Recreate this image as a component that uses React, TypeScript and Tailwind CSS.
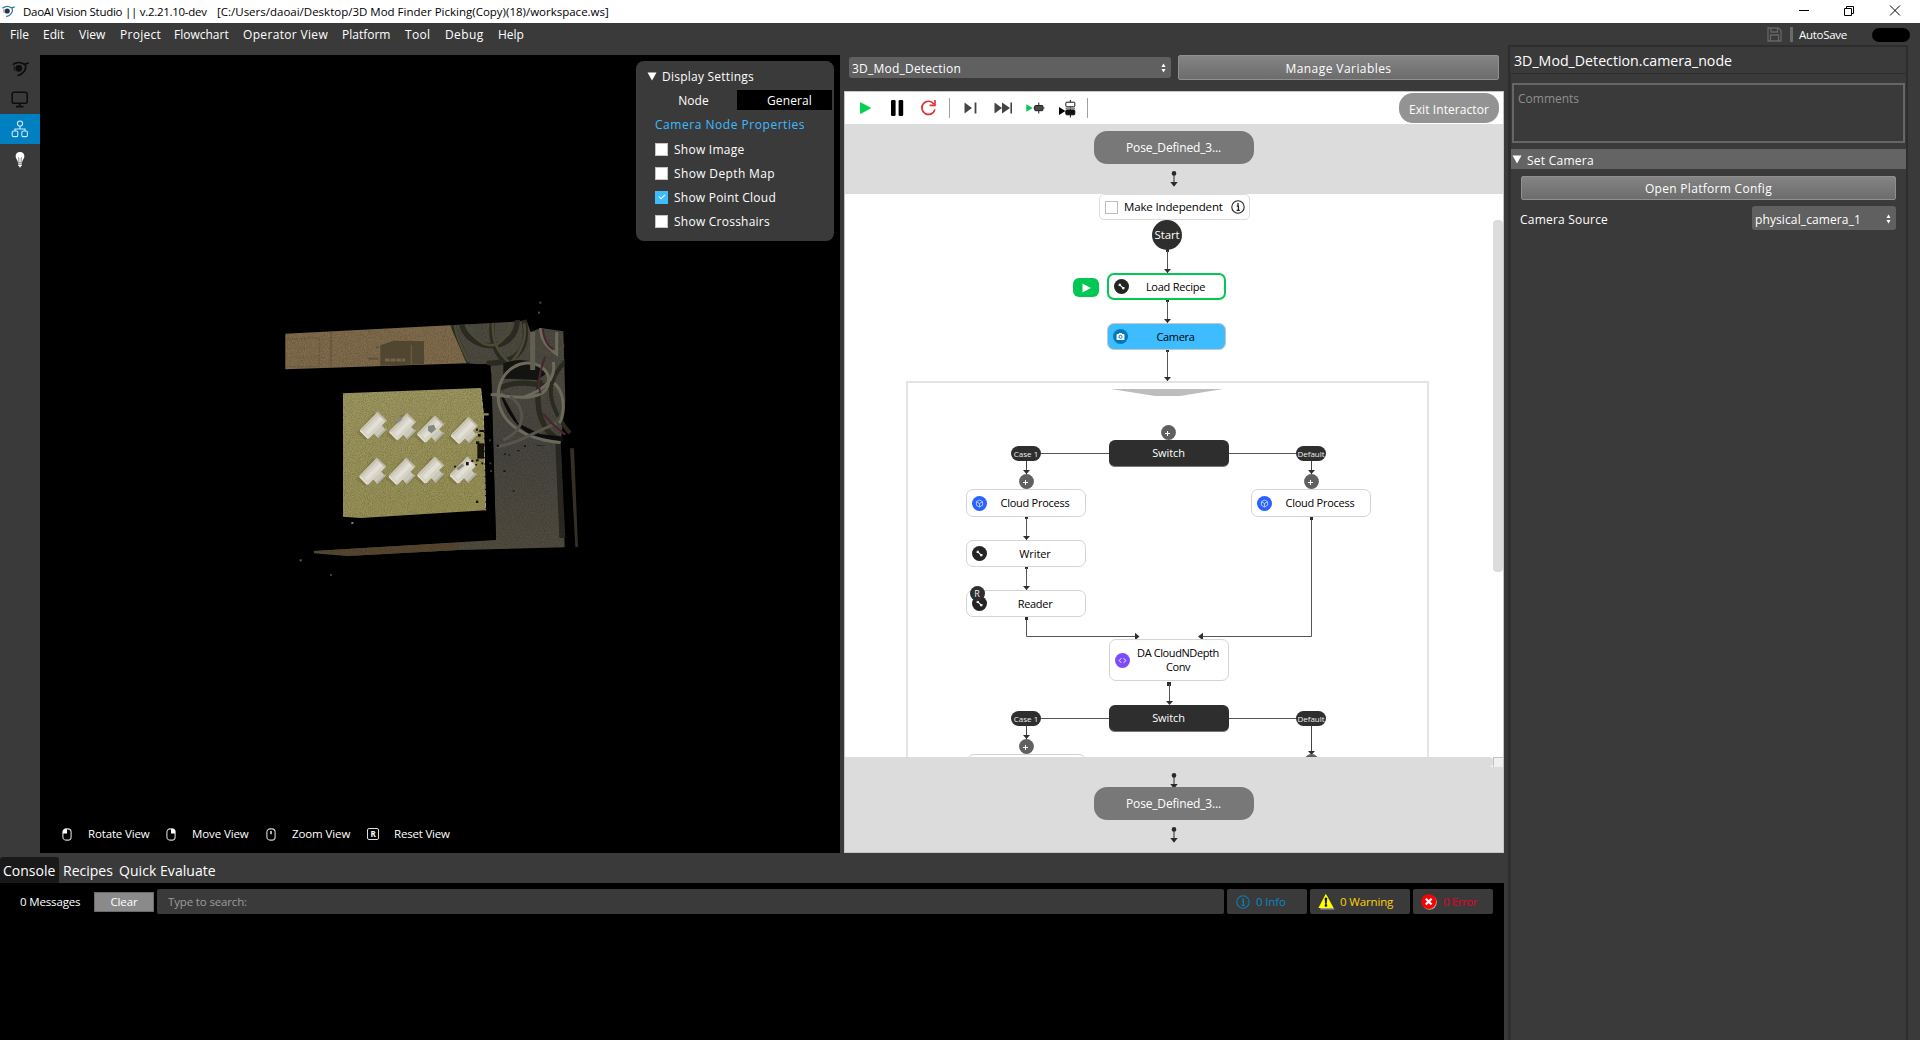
import React from 'react';
import type { ReactNode } from 'react';

/* ---------- icons ---------- */

function EyeLogo({ line, dot, className }: { line: string; dot: string; className: string }) {
  return (
    <svg viewBox="0 0 50 46" className={className} fill="none">
      <path d="M2 10 C12 3 26 2 36 9 L49 5" stroke={line} strokeWidth="5" />
      <path d="M39 10 C44 24 34 38 16 43" stroke={line} strokeWidth="5" />
      <path d="M8 14 C5 19 6 25 9 29" stroke={line} strokeWidth="2.5" />
      <circle cx="20" cy="21" r="10" fill={dot} />
    </svg>
  );
}

function Wrench() {
  return (
    <svg viewBox="0 0 15 15" className="size-[15px] shrink-0">
      <circle cx="7.5" cy="7.5" r="7.5" fill="#242424" />
      <path d="M5.8 5.8 L9.2 9.2" stroke="#fff" strokeWidth="1.1" />
      <circle cx="5.6" cy="5.8" r="1.3" fill="#fff" />
      <circle cx="9.5" cy="9.2" r="1.3" fill="#fff" />
      <path d="M3.6 5.4 L5.3 5.6 L5.2 3.8 Z M11.6 9.6 L9.8 9.4 L9.9 11.2 Z" fill="#242424" />
    </svg>
  );
}

function Cube() {
  return (
    <svg viewBox="0 0 15 15" className="size-[15px] shrink-0" fill="none">
      <circle cx="7.5" cy="7.5" r="7.5" fill="#2962ff" />
      <path
        d="M7.5 4 L10.6 5.7 V9.3 L7.5 11 L4.4 9.3 V5.7 Z M4.4 5.7 L7.5 7.5 L10.6 5.7 M7.5 7.5 V11"
        stroke="#c3d1ff"
        strokeWidth="0.9"
      />
    </svg>
  );
}

function CameraIcon() {
  return (
    <svg viewBox="0 0 15 15" className="size-[15px] shrink-0">
      <circle cx="7.5" cy="7.5" r="7.5" fill="#0277bd" />
      <path d="M4 5 H5.6 L6.3 4 H8.7 L9.4 5 H11 Q11.4 5 11.4 5.4 V10.4 Q11.4 10.9 11 10.9 H4 Q3.6 10.9 3.6 10.4 V5.4 Q3.6 5 4 5 Z" fill="#fff" />
      <circle cx="7.5" cy="7.8" r="1.5" fill="none" stroke="#0277bd" strokeWidth="1" />
    </svg>
  );
}

function CodeIcon() {
  return (
    <svg viewBox="0 0 15 15" className="size-[15px] shrink-0" fill="none">
      <circle cx="7.5" cy="7.5" r="7.5" fill="#7c4dff" />
      <path d="M6.2 5.3 L4.2 7.5 L6.2 9.7 M8.8 5.3 L10.8 7.5 L8.8 9.7" stroke="#fff" strokeWidth="1" />
    </svg>
  );
}

function Spinner() {
  return (
    <svg viewBox="0 0 5 10" className="h-[10px] w-[5px] shrink-0" fill="#fff">
      <path d="M0.5 4 L2.5 0.5 L4.5 4 Z" />
      <path d="M0.5 6 L2.5 9.5 L4.5 6 Z" />
    </svg>
  );
}

function InfoIcon({ color, className }: { color: string; className: string }) {
  return (
    <svg viewBox="0 0 14 14" className={className} fill="none">
      <circle cx="7" cy="7" r="6.2" stroke={color} strokeWidth="1.1" />
      <path d="M5.8 6 H7.4 V10.4 M5.6 10.4 H8.8" stroke={color} strokeWidth="1.3" />
      <rect x="6.2" y="3.2" width="1.6" height="1.6" fill={color} />
    </svg>
  );
}

function Mouse({ kind }: { kind: 'left' | 'right' | 'wheel' }) {
  return (
    <svg viewBox="0 0 10 13" className="h-[13px] w-[10px] shrink-0" fill="none">
      <rect x="0.9" y="0.9" width="8.2" height="11.2" rx="3.2" stroke="#d8d8d8" strokeWidth="1.1" />
      {kind === 'left' && <path d="M5 1 V5.6 H0.9 V3.6 Q1.2 1 4 1 Z" fill="#fff" />}
      {kind === 'right' && <path d="M5 1 V5.6 H9.1 V3.6 Q8.8 1 6 1 Z" fill="#fff" />}
      {kind === 'wheel' && <rect x="4.2" y="3" width="1.6" height="3.2" fill="#ddd" />}
    </svg>
  );
}

function DownArrow({ className }: { className: string }) {
  return (
    <svg viewBox="0 0 8 16" className={className}>
      <circle cx="4" cy="2.4" r="2.3" fill="#2a2a2a" />
      <path d="M4 2 V12" stroke="#2a2a2a" strokeWidth="1" />
      <path d="M0.3 11 H7.7 L4 15.8 Z" fill="#2a2a2a" />
    </svg>
  );
}

/* ---------- point cloud ---------- */

const TEES: [number, number][] = [
  [310, 376], [398, 380], [482, 387], [583, 391],
  [308, 514], [396, 514], [482, 510], [580, 510],
];
const HOLES: [number, number, number, number][] = [
  [618, 386, 6, 6], [628, 390, 14, 6], [624, 402, 8, 8], [618, 424, 10, 8], [622, 430, 20, 46], [618, 478, 8, 6],
  [634, 487, 6, 6], [588, 486, 8, 10], [604, 480, 6, 6], [616, 492, 5, 5], [618, 602, 7, 7], [552, 497, 6, 5],
  [680, 434, 7, 7], [702, 460, 6, 4], [700, 511, 7, 5], [742, 450, 6, 4], [762, 436, 6, 5], [716, 463, 4, 4], [728, 571, 6, 4],
];
const SPECKS: [number, number, string][] = [
  [244, 666, '#8d8058'], [89, 778, '#6b603a'], [180, 822, '#4a3f20'], [808, 5, '#4c4a38'], [804, 35, '#4c4a38'],
  [657, 418, '#3d3a20'], [658, 487, '#3d3a20'], [660, 510, '#3d3a20'],
];

function PointCloud() {
  return (
    <svg viewBox="0 0 960 840" className="absolute left-[230px] top-[245px] h-[280px] w-[320px]" fill="none">
      <defs>
        <filter id="grain" x="0" y="0" width="100%" height="100%" colorInterpolationFilters="sRGB">
          <feTurbulence type="fractalNoise" baseFrequency="0.35" numOctaves="2" seed="4" result="n" />
          <feColorMatrix in="n" type="matrix" values="0 0 0 0 0  0 0 0 0 0  0 0 0 0 0  0.4 0 0 0 -0.14" result="m" />
          <feComposite in="m" in2="SourceGraphic" operator="in" result="g" />
          <feMerge>
            <feMergeNode in="SourceGraphic" />
            <feMergeNode in="g" />
          </feMerge>
        </filter>
        <linearGradient id="floor" x1="0" y1="0" x2="0" y2="1">
          <stop offset="0" stopColor="#4e4c40" />
          <stop offset="0.55" stopColor="#484640" />
          <stop offset="1" stopColor="#524d3f" />
        </linearGradient>
        <linearGradient id="board" x1="0" y1="0" x2="0.3" y2="1">
          <stop offset="0" stopColor="#9f9862" />
          <stop offset="1" stopColor="#989156" />
        </linearGradient>
        <clipPath id="cables">
          <path d="M540 76 L720 66 L770 50 L778 76 L812 84 L882 92 L886 296 L908 320 L908 412 L868 432 L780 440 L680 450 L662 196 L590 190 Z" />
        </clipPath>
      </defs>
      <g filter="url(#grain)">
        <path d="M46 101 L540 76 L580 120 L592 190 L46 208 Z" fill="#816c4c" />
        <path d="M540 76 L720 66 L770 62 L782 96 L812 84 L880 94 L886 300 L872 430 L884 742 L566 750 L232 768 L132 760 L132 753 L345 740 L678 720 L662 196 L590 190 Z" fill="url(#floor)" />
        <path d="M132 753 L345 740 L566 728 L566 750 L232 768 Z" fill="#57482f" />
        <path d="M856 430 L872 430 L886 714 L868 714 Z" fill="#2b2a25" />
        <path d="M900 445 L912 445 L924 740 L916 742 Z" fill="#37332a" />
      </g>
      <path d="M183 95 V204" stroke="#5f4f38" strokeWidth="3" />
      <path d="M52 117 L148 114 V200 H52" stroke="#6a573c" strokeWidth="4" strokeDasharray="9 3" />
      <path d="M60 145 H138 M60 172 H138" stroke="#745f42" strokeWidth="4" strokeDasharray="9 3" />
      <path d="M331 136 L372 122 L462 124 V193 L331 197 Z" fill="#51462f" />
      <path d="M345 180 H405" stroke="#75634a" strokeWidth="9" strokeDasharray="14 3" />
      <path d="M424 134 V194" stroke="#6b5a3f" strokeWidth="4" />
      <path d="M294 176 H326 M318 142 H326" stroke="#5f4f38" strokeWidth="5" />
      <g clipPath="url(#cables)">
        <g stroke="#2b2a20" strokeWidth="16">
          <path d="M552 72 C552 110 578 150 592 190" />
          <path d="M575 75 C600 160 740 160 742 60" />
          <path d="M668 60 C655 150 700 210 810 236" />
          <path d="M762 60 C780 150 740 190 650 190" />
          <path d="M810 240 C790 330 820 400 870 420" />
          <path d="M690 265 C730 240 800 250 840 262" />
          <path d="M890 180 C830 240 820 300 900 400" strokeWidth="12" />
        </g>
        <g stroke="#4a4a37" strokeWidth="8">
          <path d="M554 72 C560 120 580 150 596 186" />
          <path d="M590 72 C620 145 700 170 722 66" />
          <path d="M670 60 C660 140 700 200 800 222" />
          <path d="M762 70 C772 120 750 160 720 190" />
          <path d="M780 120 C800 170 850 170 890 130" />
          <path d="M850 260 C900 300 880 360 830 385" />
        </g>
        <path d="M700 190 Q780 160 832 220 L800 240 L700 236 Z" fill="#131310" />
        <path d="M690 280 Q720 380 800 414 L880 424 L880 410 L810 402 L745 370 L700 290 Z" fill="#0c0c0a" />
        <g stroke="#6c6a5b" strokeWidth="9">
          <path d="M664 282 C760 300 850 300 834 226 C810 172 730 180 700 232 C660 300 690 410 872 428" />
          <path d="M788 96 V210" strokeWidth="15" stroke="#615f52" />
          <path d="M812 84 C812 120 830 140 860 162 V96" />
          <path d="M850 186 C860 240 820 270 760 292" />
          <path d="M852 250 C880 270 890 330 868 370" />
          <path d="M674 442 C760 425 780 400 860 370" stroke="#57554a" />
          <path d="M720 290 C770 320 770 390 700 420" stroke="#55534a" />
        </g>
        <g stroke="#4a2430" strokeWidth="6">
          <path d="M818 84 C822 120 834 140 850 148" />
          <path d="M826 170 C810 210 800 250 812 280" />
          <path d="M820 340 C850 380 870 390 886 404" />
        </g>
        <path d="M800 436 H836 V460 H806 Z" fill="#1c1b16" />
      </g>
      <path d="M185 214 L650 192 L664 220 L678 718 L345 736 L140 744 Z" fill="#000" />
      <path d="M662 284 H700" stroke="#6c6a5b" strokeWidth="8" />
      <g filter="url(#grain)">
        <path d="M219 280 L632 264 L640 340 L646 631 L272 654 L219 650 Z" fill="url(#board)" />
      </g>
      <path d="M632 266 L640 340 L647 631" stroke="#aaa47e" strokeWidth="3" strokeDasharray="16 3" />
      <path d="M640 343 H656" stroke="#8f8562" strokeWidth="7" />
      {TEES.map(([x, y], i) => (
        <g key={i} transform={`translate(${x} ${y})`}>
          <path d="M-36 34 L14 -28 M0 0 L28 30" stroke="#766e36" strokeWidth="34" opacity="0.5" />
          <path d="M-2 -4 L24 24" stroke="#cbc7b9" strokeWidth="34" />
          <path d="M14 36 L37 12" stroke="#aeb0a4" strokeWidth="6" strokeLinecap="round" />
          <path d="M-27 27 L24 -25" stroke="#d6d2c5" strokeWidth="38" />
          <path d="M-36 14 L12 -34" stroke="#c8c3b0" strokeWidth="7" />
          <path d="M-20 24 L26 -22" stroke="#e2dfd5" strokeWidth="12" />
          <path d="M-38 17 L-17 38" stroke="#e9e6de" strokeWidth="4" strokeLinecap="round" />
          <path d="M13 -38 L38 -14" stroke="#bdb8a3" strokeWidth="5" strokeLinecap="round" />
        </g>
      ))}
      <path d="M474 378 L492 374 L498 388 L484 400 L474 392 Z" fill="#85887f" />
      <path d="M380 366 L394 354 M562 508 L580 494" stroke="#8a8a80" strokeWidth="9" />
      {HOLES.map(([x, y, w, h], i) => (
        <rect key={i} x={x} y={y} width={w} height={h} fill="#15140c" />
      ))}
      {SPECKS.map(([x, y, c], i) => (
        <rect key={i} x={x} y={y} width="6" height="6" fill={c} />
      ))}
    </svg>
  );
}

/* ---------- small UI pieces ---------- */

const MENU: [string, string][] = [
  ['File', 'w-[33px]'],
  ['Edit', 'w-[36px]'],
  ['View', 'w-[41px]'],
  ['Project', 'w-[54px] tracking-[0.27px]'],
  ['Flowchart', 'w-[69px]'],
  ['Operator View', 'w-[99px] tracking-[0.33px]'],
  ['Platform', 'w-[63px]'],
  ['Tool', 'w-[40px] tracking-[0.3px]'],
  ['Debug', 'w-[53px] tracking-[0.4px]'],
  ['Help', 'w-[30px]'],
];

function CheckRow({ label, checked, className }: { label: string; checked?: boolean; className: string }) {
  return (
    <div className="flex h-6 items-center gap-[6px]">
      {checked ? (
        <span className="flex size-[13px] items-center justify-center bg-[#3dbdff]">
          <svg viewBox="0 0 9 7" className="h-[6px] w-[8px]" fill="none">
            <path d="M1 3 L3.4 5.6 L8 1" stroke="#fff" strokeWidth="1.2" />
          </svg>
        </span>
      ) : (
        <span className="size-[13px] border border-[#c4c4c4] bg-white" />
      )}
      <span className={`pt-[2px] ${className}`}>{label}</span>
    </div>
  );
}

function FlowNode({ pos, icon, children, look }: { pos: string; icon: ReactNode; children: ReactNode; look?: string }) {
  return (
    <div className={`absolute flex items-center rounded-[7px] pl-[5px] pr-[2px] text-[11px] ${pos} ${look ?? 'border-[1.5px] border-[#d4d4d4] bg-white'}`}>
      {icon}
      <span className="flex-1 text-center leading-[14px]">{children}</span>
    </div>
  );
}

function SwitchNode({ pos }: { pos: string }) {
  return (
    <div className={`absolute flex h-[27px] w-[120px] items-center justify-center rounded-[6px] border-b border-[#777] bg-[#2e2e2e] pr-px text-[11px] tracking-[-0.1px] text-white ${pos}`}>
      Switch
    </div>
  );
}

function Pill({ pos, children }: { pos: string; children: string }) {
  return (
    <div className={`absolute flex h-[15px] w-[30px] items-center justify-center whitespace-nowrap rounded-full bg-[#2e2e2e] text-[8px] leading-none text-[#eee] ${pos}`}>
      {children}
    </div>
  );
}

function Plus({ pos }: { pos: string }) {
  return (
    <svg viewBox="0 0 15 15" className={`absolute size-[15px] ${pos}`}>
      <circle cx="7.5" cy="7.5" r="7.4" fill="#606060" />
      <path d="M6.5 6 V11 M4 8.5 H9" stroke="#fff" strokeWidth="1" />
    </svg>
  );
}

/* Vertical connectors of the flow: x, start, end */
const LINKS: [number, number, number][] = [
  [322, 57, 79],
  [322, 107, 129],
  [322, 157, 187],
  [181, 324, 346],
  [181, 374, 396],
];
const DROPS: [number, number, number][] = [
  [181, 266, 280],
  [466, 266, 280],
  [181, 531, 545],
  [466, 531, 561],
];

function Connectors() {
  return (
    <svg viewBox="0 0 648 563" className="absolute left-0 top-0 h-[563px] w-[648px]" fill="none">
      {LINKS.map(([x, a, b]) => (
        <g key={`${x}-${a}`}>
          <rect x={x - 1} y={a - 2} width="3" height="3" fill="#2e2e2e" />
          <path d={`M${x + 0.5} ${a} V${b}`} stroke="#555" />
          <path d={`M${x - 3} ${b - 4} H${x + 4} L${x + 0.5} ${b} Z`} fill="#2e2e2e" />
        </g>
      ))}
      {DROPS.map(([x, a, b]) => (
        <g key={`${x}-${a}`}>
          <path d={`M${x + 0.5} ${a} V${b}`} stroke="#444" />
          <path d={`M${x - 3} ${b - 4} H${x + 4} L${x + 0.5} ${b} Z`} fill="#2e2e2e" />
        </g>
      ))}
      <path d="M181.5 425 V442.5 H292" stroke="#555" />
      <path d="M466.5 325 V442.5 H356" stroke="#555" />
      <path d="M290 438.8 V446.2 L294.5 442.5 Z M358 438.8 V446.2 L353 442.5 Z" fill="#2e2e2e" />
      <path d="M180 423 h3 v3 h-3 Z M465 323 h3 v3 h-3 Z M322 488 h4 v4 h-4 Z" fill="#2e2e2e" />
      <path d="M324.5 490 V510" stroke="#555" />
      <path d="M321 507 H328 L324.5 511 Z" fill="#2e2e2e" />
      <path d="M196 259.5 H265 M383 259.5 H452 M196 524.5 H265 M383 524.5 H452" stroke="#555" />
      <path d="M266 195 H378 L335 202 H310 Z" fill="#bdbdbd" />
    </svg>
  );
}

/* ---------- sections ---------- */

function TitleBar() {
  return (
    <div className="flex h-[23px] shrink-0 items-center bg-white pl-[2px] text-black">
      <EyeLogo line="#2b7fa8" dot="#33303c" className="h-[13px] w-[13px]" />
      <span className="ml-[8px] w-[194px] whitespace-nowrap text-[11.5px] leading-none tracking-[-0.28px]">
        DaoAI Vision Studio || v.2.21.10-dev
      </span>
      <span className="whitespace-nowrap text-[11.5px] leading-none">
        [C:/Users/daoai/Desktop/3D Mod Finder Picking(Copy)(18)/workspace.ws]
      </span>
      <svg viewBox="0 0 104 12" className="ml-auto mr-[18px] h-[12px] w-[104px] -translate-y-px" fill="none" stroke="#000">
        <path d="M1 5.5 H11" />
        <path d="M46.5 3.5 H53.5 V10.5 H46.5 Z M48.5 3 V1.5 H55.5 V8.5 H54" />
        <path d="M92 0.5 L102 10.5 M102 0.5 L92 10.5" />
      </svg>
    </div>
  );
}

function MenuBar() {
  return (
    <div className="flex h-[22px] shrink-0 items-center pl-[10px] pt-px">
      {MENU.map(([label, cls]) => (
        <span key={label} className={`whitespace-nowrap pt-px ${cls}`}>
          {label}
        </span>
      ))}
      <svg viewBox="0 0 15 15" className="ml-auto size-[15px]" fill="none" stroke="#666" strokeWidth="1.3">
        <path d="M1 1 H11.5 L14 3.5 V14 H1 Z M4 1 V5 H10.5 V1 M3.5 14 V8 H11.5 V14" />
      </svg>
      <span className="ml-[8px] h-[15px] w-[3px] bg-[#6a6a6a]" />
      <span className="ml-[6px] w-[73px] pt-px text-[11.5px] font-medium tracking-[-0.3px]">AutoSave</span>
      <span className="mr-[10px] h-[14px] w-[38px] rounded-full bg-black" />
    </div>
  );
}

function Sidebar() {
  return (
    <div className="flex w-10 shrink-0 flex-col pt-[9px]">
      <div className="flex h-[30px] items-center justify-center">
        <EyeLogo line="#0d0d0d" dot="#0d0d0d" className="h-[16px] w-[17px]" />
      </div>
      <div className="flex h-[30px] items-center justify-center">
        <svg viewBox="0 0 18 17" className="h-[17px] w-[18px]" fill="none" stroke="#0d0d0d" strokeWidth="1.5">
          <rect x="1.2" y="1.2" width="15" height="11" rx="1.8" />
          <path d="M8.7 12.5 V15.5 M5 15.7 H12.5" strokeWidth="1.8" />
        </svg>
      </div>
      <div className="flex h-[30px] items-center justify-center bg-[#0080c0]">
        <svg viewBox="0 0 18 18" className="size-[18px]" fill="none" stroke="#cfeaff" strokeWidth="1.1">
          <circle cx="9" cy="3.6" r="2.6" />
          <path d="M9 6.2 V9 M4 11 V9 H14 V11" />
          <rect x="1.2" y="11" width="5.6" height="5.6" rx="1.4" />
          <rect x="10.8" y="11" width="5.6" height="5.6" rx="1.4" />
        </svg>
      </div>
      <div className="flex h-[30px] items-center justify-center">
        <svg viewBox="0 0 12 17" className="h-[17px] w-[12px]">
          <path d="M6 1 C9 1 10.4 3.2 10.4 5.2 C10.4 7.6 8.4 8.6 8 11.4 H4 C3.6 8.6 1.6 7.6 1.6 5.2 C1.6 3.2 3 1 6 1 Z" fill="#fff" />
          <path d="M4.8 11 V7 L4 6.4 M7.2 11 V7 L8 6.4" stroke="#3a3a3a" strokeWidth="0.6" fill="none" />
          <path d="M4.2 12.8 H7.8 M4.2 14.4 H7.8 M5 15.8 H7" stroke="#fff" strokeWidth="1.1" />
        </svg>
      </div>
    </div>
  );
}

function Viewport() {
  return (
    <div className="relative mt-[10px] flex h-[798px] w-[800px] flex-col justify-between bg-black">
      <PointCloud />
      <div className="relative ml-[596px] mt-[6px] h-[180px] w-[198px] rounded-[8px] bg-[#3a3a3a] pt-[4px]">
        <div className="flex h-[22px] items-center pl-[11px]">
          <svg viewBox="0 0 10 9" className="mr-[5px] h-[9px] w-[10px]">
            <path d="M0.5 0.5 H9.5 L5 8.5 Z" fill="#fff" />
          </svg>
          <span className="pt-px tracking-[0.24px]">Display Settings</span>
        </div>
        <div className="mt-[3px] flex h-5 pr-[2px]">
          <span className="flex w-[101px] items-center justify-center pl-[14px] pt-[2px]">Node</span>
          <span className="flex flex-1 items-center justify-center bg-black pl-[10px] pt-[2px] tracking-[0.12px]">General</span>
        </div>
        <div className="flex h-[27px] items-center pl-[19px] pt-[3px] tracking-[0.53px] text-[#3dbdff]">Camera Node Properties</div>
        <div className="pl-[19px]">
          <CheckRow label="Show Image" className="tracking-[0.25px]" />
          <CheckRow label="Show Depth Map" className="tracking-[0.36px]" />
          <CheckRow label="Show Point Cloud" checked className="tracking-[0.23px]" />
          <CheckRow label="Show Crosshairs" className="tracking-[0.24px]" />
        </div>
      </div>
      <div className="mb-[10px] flex h-[18px] items-center whitespace-nowrap pl-[22px] text-[11.5px] tracking-[-0.1px]">
        <Mouse kind="left" />
        <span className="ml-[16px] w-[78px] tracking-[-0.15px]">Rotate View</span>
        <Mouse kind="right" />
        <span className="ml-[16px] w-[74px]">Move View</span>
        <Mouse kind="wheel" />
        <span className="ml-[16px] w-[75px]">Zoom View</span>
        <span className="flex size-[12px] items-center justify-center rounded-[2px] border border-[#ddd] text-[8px] font-bold leading-none">R</span>
        <span className="ml-[15px] tracking-[-0.2px]">Reset View</span>
      </div>
    </div>
  );
}

function Toolbar() {
  return (
    <div className="flex h-8 shrink-0 items-center justify-between bg-white pl-[14px] pr-[4px]">
      <svg viewBox="0 0 232 22" className="h-[22px] w-[232px]" fill="none">
        <path d="M1 6 Q1 5 2 5.4 L11.5 10.4 Q12 11 11.5 11.6 L2 16.8 Q1 17 1 16 Z" fill="#05d253" />
        <rect x="32" y="3" width="4.6" height="16" rx="1.2" fill="#000" />
        <rect x="39.6" y="3" width="4.6" height="16" rx="1.2" fill="#000" />
        <path d="M75 7.2 A6.6 6.6 0 1 0 75.9 12.4" stroke="#dc2f2f" strokeWidth="1.7" />
        <path d="M76 3 V8.4 H70.6" stroke="#dc2f2f" strokeWidth="1.6" />
        <path d="M90.5 1 V21 M228.5 1 V21" stroke="#a0a0a0" />
        <path d="M105.5 5.5 L113 11 L105.5 16.5 Z" fill="#444" />
        <path d="M116.5 5.5 V16.5" stroke="#444" strokeWidth="1.8" />
        <path d="M135.5 5.5 L143 11 L135.5 16.5 Z M143 5.5 L151 11 L143 16.5 Z" fill="#444" />
        <path d="M152.2 5.5 V16.5" stroke="#444" strokeWidth="1.6" />
        <path d="M167.3 7.2 L173.6 11 L167.3 14.8 Z" fill="#05c853" />
        <path d="M179.8 5.5 V16.5 M174.5 11 H185.5" stroke="#222" />
        <rect x="175.7" y="8.5" width="8.2" height="5.2" rx="0.8" fill="#484848" stroke="#222" />
        <path d="M200 10 L206.4 14 L200 18 Z" fill="#000" />
        <path d="M211.4 3 V20.5" stroke="#222" />
        <rect x="206.8" y="5.2" width="9" height="4.6" rx="1" fill="#fff" stroke="#111" />
        <path d="M206.5 11.4 H216" stroke="#888" strokeWidth="1.8" />
        <rect x="206.8" y="13" width="9" height="4.8" rx="1" fill="#111" stroke="#111" />
      </svg>
      <span className="flex h-[30px] w-[100px] items-center justify-center rounded-[14px] bg-[#939393] pt-[3px] tracking-[0.08px]">
        Exit Interactor
      </span>
    </div>
  );
}

function PoseButton() {
  return (
    <span className="flex h-[33px] w-[160px] items-center justify-center rounded-[13px] bg-[#787878] tracking-[-0.16px]">
      Pose_Defined_3...
    </span>
  );
}

function FlowCanvas() {
  return (
    <div className="relative h-[563px] shrink-0 overflow-hidden bg-white text-black">
      <div className="absolute left-[61px] top-[187px] h-[400px] w-[523px] border-2 border-[#e4e4e4]" />
      <Connectors />
      <div className="absolute left-[254px] top-0 flex h-[26px] w-[151px] items-center whitespace-nowrap rounded-[5px] border border-[#dcdcdc] bg-white pl-[5px]">
        <span className="size-[13px] border border-[#bdbdbd] bg-white" />
        <span className="ml-[6px] w-[107px] text-[11.5px] tracking-[-0.15px]">Make Independent</span>
        <InfoIcon color="#222" className="size-[14px] shrink-0" />
      </div>
      <div className="absolute left-[307px] top-[26px] flex size-[30px] items-center justify-center rounded-full bg-[#2e2e2e] text-[11.5px] tracking-[-0.1px] text-white">
        Start
      </div>
      <div className="absolute left-[228px] top-[84px] flex h-[19px] w-[26px] items-center justify-center rounded-[6px] bg-[#00c853]">
        <svg viewBox="0 0 9 10" className="h-[10px] w-[9px]">
          <path d="M0.5 0.5 L8.8 5 L0.5 9.5 Z" fill="#fff" />
        </svg>
      </div>
      <FlowNode pos="left-[262px] top-[79px] h-[27px] w-[119px]" icon={<Wrench />} look="border-2 border-[#00c853] bg-white tracking-[-0.25px]">
        Load Recipe
      </FlowNode>
      <FlowNode pos="left-[262px] top-[129px] h-[27px] w-[119px]" icon={<CameraIcon />} look="border-[1.5px] border-[#c6c6c6] bg-[#3dbdff] tracking-[-0.3px]">
        Camera
      </FlowNode>
      <SwitchNode pos="left-[264px] top-[246px]" />
      <Plus pos="left-[316px] top-[231px]" />
      <Pill pos="left-[166px] top-[252px]">Case 1</Pill>
      <Pill pos="left-[451px] top-[252px]">Default</Pill>
      <Plus pos="left-[174px] top-[280px]" />
      <Plus pos="left-[459px] top-[280px]" />
      <FlowNode pos="left-[121px] top-[295px] h-[28px] w-[120px]" icon={<Cube />}>
        <span className="tracking-[-0.25px]">Cloud Process</span>
      </FlowNode>
      <FlowNode pos="left-[406px] top-[295px] h-[28px] w-[120px]" icon={<Cube />}>
        <span className="tracking-[-0.25px]">Cloud Process</span>
      </FlowNode>
      <FlowNode pos="left-[121px] top-[346px] h-[27px] w-[120px]" icon={<Wrench />}>
        <span className="tracking-[-0.1px]">Writer</span>
      </FlowNode>
      <FlowNode pos="left-[121px] top-[396px] h-[27px] w-[120px]" icon={<Wrench />}>
        <span className="tracking-[-0.3px]">Reader</span>
      </FlowNode>
      <span className="absolute left-[125px] top-[392px] flex size-[15px] items-center justify-center rounded-full bg-[#2e2e2e] pr-px text-[9px] leading-none text-[#eee]">
        R
      </span>
      <FlowNode pos="left-[264px] top-[445px] h-[42px] w-[120px]" icon={<CodeIcon />}>
        <span className="whitespace-nowrap tracking-[-0.4px]">
          DA CloudNDepth
          <br />
          Conv
        </span>
      </FlowNode>
      <SwitchNode pos="left-[264px] top-[511px]" />
      <Pill pos="left-[166px] top-[517px]">Case 1</Pill>
      <Pill pos="left-[451px] top-[517px]">Default</Pill>
      <Plus pos="left-[174px] top-[545px]" />
      <Plus pos="left-[459px] top-[560px]" />
      <div className="absolute left-[122px] top-[560px] h-[27px] w-[119px] rounded-[7px] border border-[#d2d2d2] bg-white" />
      <div className="absolute right-0 top-[26px] h-[352px] w-[10px] rounded-[4px] bg-[#dcdcdc]" />
    </div>
  );
}

function FlowPanel() {
  return (
    <div className="ml-[4px] flex w-[660px] shrink-0 flex-col">
      <div className="flex h-[46px] items-start pt-[10px]">
        <div className="ml-[5px] mt-[2px] flex h-[21px] w-[322px] items-center justify-between rounded-[3px] bg-[#606060] pl-[3px] pr-[5px]">
          <span className="pt-[2px] tracking-[0.22px]">3D_Mod_Detection</span>
          <Spinner />
        </div>
        <div className="ml-[7px] flex h-[25px] w-[321px] items-center justify-center rounded-[2px] border border-[#8f8f8f] bg-gradient-to-b from-[#848484] to-[#6c6c6c] pt-[2px] tracking-[0.43px]">
          Manage Variables
        </div>
      </div>
      <div className="flex h-[762px] flex-col overflow-hidden border border-[#c4c4c4] bg-[#dcdcdc]">
        <Toolbar />
        <div className="flex h-[70px] shrink-0 flex-col items-center pr-[1px] pt-[7px]">
          <PoseButton />
          <DownArrow className="mt-[7px] h-[16px] w-[8px]" />
        </div>
        <FlowCanvas />
        <div className="flex h-[10px] shrink-0 bg-white">
          <span className="w-[648px] rounded-r-[4px] bg-[#dcdcdc]" />
          <span className="flex-1 border-l border-t border-[#c4c4c4] bg-[#f0f0f0]" />
        </div>
        <div className="flex flex-1 flex-col items-center pr-[1px] pt-[6px]">
          <DownArrow className="h-[16px] w-[8px]" />
          <div className="-mt-[2px]">
            <PoseButton />
          </div>
          <DownArrow className="mt-[7px] h-[16px] w-[8px]" />
        </div>
      </div>
    </div>
  );
}

function ConsolePanel() {
  return (
    <div className="flex flex-1 flex-col">
      <div className="flex h-[30px] shrink-0 items-end whitespace-nowrap text-[14px]">
        <span className="flex h-[26px] w-[59px] items-center rounded-t-[3px] bg-[#191919] pl-[3px] pt-px">Console</span>
        <span className="flex h-[26px] w-[56px] items-center pl-[4px] pt-px">Recipes</span>
        <span className="flex h-[26px] items-center pl-[4px] pt-px tracking-[0.05px]">Quick Evaluate</span>
      </div>
      <div className="w-[1504px] flex-1 bg-black pt-[6px]">
        <div className="flex h-[25px] items-center text-[11.5px] tracking-[-0.15px]">
          <span className="w-[74px] whitespace-nowrap pl-[20px]">0 Messages</span>
          <span className="ml-[20px] flex h-5 w-[60px] items-center justify-center border border-[#6b6b6b] bg-[#8a8a8a]">Clear</span>
          <span className="ml-[3px] flex h-[25px] w-[1067px] items-center rounded-[2px] bg-[#3a3a3a] pl-[11px] text-[#9c9c9c]">
            Type to search:
          </span>
          <span className="ml-[3px] flex h-[25px] w-[80px] items-center rounded-[2px] bg-[#3a3a3a] pl-[9px] text-[#0b86c4]">
            <InfoIcon color="#0b7cb5" className="mr-[6px] size-[14px]" />0 Info
          </span>
          <span className="ml-[3px] flex h-[25px] w-[100px] items-center rounded-[2px] bg-[#3a3a3a] pl-[8px] text-[#ffd200]">
            <svg viewBox="0 0 17 17" className="mr-[5px] size-[17px]">
              <path d="M8.6 2 L16.6 16.4 H2 Z" fill="#999" />
              <path d="M7.8 0.8 L15.4 15 H0.4 Z" fill="#ffff00" />
              <path d="M7 5 H8.8 L8.4 10.5 H7.4 Z M7 11.6 H8.8 V13.3 H7 Z" fill="#000" stroke="#000" strokeWidth="0.6" />
            </svg>
            0 Warning
          </span>
          <span className="ml-[3px] flex h-[25px] w-[80px] items-center rounded-[2px] bg-[#3a3a3a] pl-[8px] tracking-[-0.4px] text-[#e4002b]">
            <svg viewBox="0 0 16 16" className="mr-[6px] size-[16px]">
              <circle cx="8.5" cy="8.5" r="7.3" fill="#aaa" />
              <circle cx="7.7" cy="7.6" r="7.4" fill="#f00" />
              <path d="M4.8 4.7 L10.6 10.5 M10.6 4.7 L4.8 10.5" stroke="#fff" strokeWidth="2.2" />
            </svg>
            0 Error
          </span>
        </div>
      </div>
    </div>
  );
}

function PropertiesPanel() {
  return (
    <div className="flex w-[400px] shrink-0 flex-col border-x-2 border-t-2 border-[#2d2d2d]">
      <div className="flex h-[27px] items-center border-b border-[#2d2d2d] pl-[4px] pt-[2px] text-[14.2px]">3D_Mod_Detection.camera_node</div>
      <div className="flex flex-1 flex-col border-l border-[#303030] px-px">
        <div className="mt-[9px] h-[60px] border-2 border-[#666] pl-[4px] pt-[6px] text-[#8e8e8e]">Comments</div>
        <div className="-mx-px mt-[6px] flex h-5 items-center bg-[#646464] pl-px">
          <svg viewBox="0 0 10 9" className="mr-[5px] h-[9px] w-[10px]">
            <path d="M0.5 0.5 H9.5 L5 8.5 Z" fill="#fff" />
          </svg>
          <span className="pt-[3px] tracking-[0.26px]">Set Camera</span>
        </div>
        <div className="ml-[9px] mt-[7px] flex h-6 w-[375px] items-center justify-center rounded-[2px] border border-[#8f8f8f] bg-gradient-to-b from-[#848484] to-[#6c6c6c] pt-[2px] tracking-[0.29px]">
          Open Platform Config
        </div>
        <div className="ml-[8px] mt-[6px] flex h-6 w-[376px] items-center justify-between">
          <span className="pt-[3px] tracking-[0.21px]">Camera Source</span>
          <span className="flex h-6 w-[144px] items-center justify-between rounded-[3px] bg-[#606060] pl-[3px] pr-[5px] pt-px">
            <span className="pt-[2px] tracking-[0.11px]">physical_camera_1</span>
            <Spinner />
          </span>
        </div>
      </div>
    </div>
  );
}

export default function App() {
  return (
    <div className="flex h-[1040px] w-[1920px] flex-col overflow-hidden bg-[#3a3a3a] font-['Open_Sans','Noto_Sans',sans-serif] text-[12px] leading-[16px] text-white">
      <TitleBar />
      <MenuBar />
      <div className="flex flex-1">
        <div className="flex w-[1508px] shrink-0 flex-col">
          <div className="flex h-[808px] shrink-0">
            <Sidebar />
            <Viewport />
            <FlowPanel />
          </div>
          <ConsolePanel />
        </div>
        <PropertiesPanel />
      </div>
    </div>
  );
}
